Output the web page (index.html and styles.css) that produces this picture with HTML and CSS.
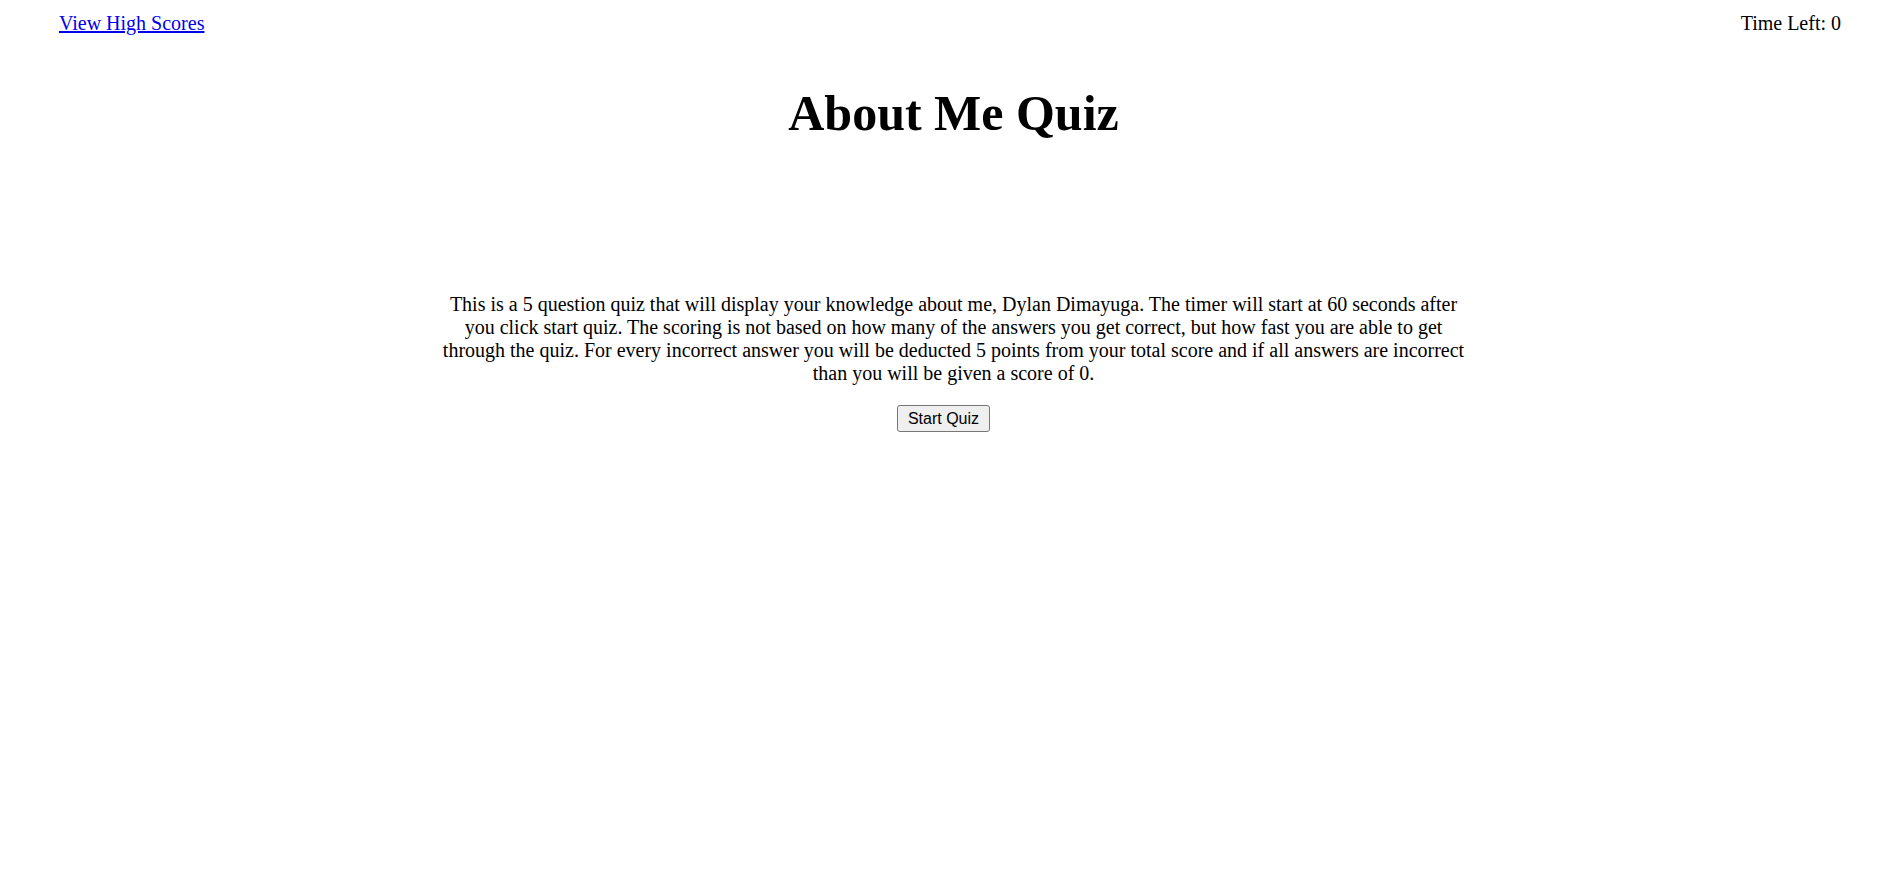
FILE: index.html
```html
<!DOCTYPE html>
<html lang="en">
<head>
<meta charset="utf-8">
<title>About Me Quiz</title>
<link rel="stylesheet" href="styles.css">
</head>
<body>
<header class="top-bar">
  <a class="scores-link" href="#">View High Scores</a>
  <div class="timer">Time Left: 0</div>
</header>
<main class="quiz">
  <h1 class="quiz-title">About Me Quiz</h1>
  <section class="intro">
    <p class="intro-text">This is a 5 question quiz that will display your knowledge about me, Dylan Dimayuga. The timer will start at 60 seconds after you click start quiz. The scoring is not based on how many of the answers you get correct, but how fast you are able to get through the quiz. For every incorrect answer you will be deducted 5 points from your total score and if all answers are incorrect than you will be given a score of 0.</p>
  </section>
  <div class="start-row">
    <button class="start-btn" type="button">Start Quiz</button>
  </div>
</main>
</body>
</html>
```
FILE: styles.css
```css
html, body {
  margin: 0;
  padding: 0;
  background: #ffffff;
}

body {
  font-family: "Liberation Serif", "Times New Roman", serif;
  font-size: 20px;
  color: #000000;
}

.top-bar {
  display: flex;
  justify-content: space-between;
  align-items: flex-start;
  padding: 12px 52px 0 59px;
}

.scores-link {
  color: #0000ee;
  text-decoration: underline;
}

.timer {
  color: #000000;
}

.quiz-title {
  margin: 49px 0 0 0;
  padding-left: 14px;
  font-size: 50px;
  font-weight: bold;
  text-align: center;
}

.intro {
  padding-left: 14px;
  margin-top: 151px;
}

.intro-text {
  max-width: 1030px;
  margin: 0 auto;
  text-align: center;
}

.start-row {
  display: flex;
  justify-content: center;
  padding-right: 6px;
  margin-top: 20px;
}

.start-btn {
  font-family: "Liberation Sans", Arial, sans-serif;
  font-size: 16px;
  height: 27px;
  padding: 0 10px;
  color: #000000;
  background: #efefef;
  border: 1px solid #767676;
  border-radius: 3px;
}
```
